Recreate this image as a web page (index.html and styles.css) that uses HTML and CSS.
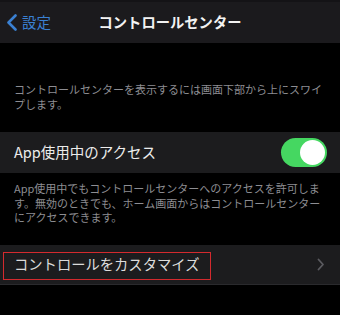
FILE: index.html
```html
<!DOCTYPE html>
<html lang="ja">
<head>
<meta charset="utf-8">
<link rel="stylesheet" href="styles.css">
</head>
<body>
<div class="screen">
  <header class="nav">
    <div class="back">
      <svg class="back-chev" width="12" height="17" viewBox="0 0 12 17"><path d="M9.5 1.5 L2.5 8.5 L9.5 15.5" fill="none" stroke="#3a80d2" stroke-width="2.6" stroke-linecap="round" stroke-linejoin="round"/></svg>
      <span class="back-label">設定</span>
    </div>
    <div class="title">コントロールセンター</div>
  </header>

  <p class="footer footer-first">コントロールセンターを表示するには画面下部から上にスワイプします。</p>

  <div class="row">
    <span class="row-label">App使用中のアクセス</span>
    <div class="toggle"><div class="knob"></div></div>
  </div>

  <p class="footer footer-second">App使用中でもコントロールセンターへのアクセスを許可します。無効のときでも、ホーム画面からはコントロールセンターにアクセスできます。</p>

  <div class="row row-custom">
    <span class="row-label row-label-custom">コントロールをカスタマイズ</span>
    <svg class="chev" width="8" height="13" viewBox="0 0 8 13"><path d="M1.5 1.5 L6 6.5 L1.5 11.5" fill="none" stroke="#5b5b60" stroke-width="1.8" stroke-linecap="round" stroke-linejoin="round"/></svg>
    <div class="highlight"></div>
  </div>
</div>
</body>
</html>
```

FILE: styles.css
```css
* { box-sizing: border-box; }
html, body {
  margin: 0;
  padding: 0;
  background: #000;
}
body {
  font-family: "Noto Sans CJK JP", "Noto Sans", sans-serif;
  width: 340px;
  height: 315px;
  overflow: hidden;
}
.screen {
  display: flex;
  flex-direction: column;
  width: 340px;
}
.nav {
  position: relative;
  height: 43px;
  background: #1b1a1d;
  border-top: 2px solid #141316;
  display: flex;
  align-items: center;
  justify-content: center;
}
.back {
  position: absolute;
  left: 6px;
  top: 0;
  height: 100%;
  display: flex;
  align-items: center;
  gap: 4px;
}
.back-chev { display: block; }
.back-label {
  color: #3a80d2;
  font-size: 14.5px;
  line-height: 1;
}
.title {
  color: #f2f2f2;
  font-size: 14.3px;
  font-weight: 700;
  line-height: 1;
}
.footer {
  margin: 0;
  padding: 0 14px;
  color: #8d8d92;
  font-size: 11px;
  line-height: 14.5px;
}
.footer-first {
  padding-top: 39px;
  padding-bottom: 21px;
}
.footer-second {
  padding-top: 8px;
  padding-bottom: 20px;
}
.row {
  position: relative;
  height: 41px;
  background: #1c1c1e;
  display: flex;
  align-items: center;
  justify-content: space-between;
  padding: 0 13px 0 14px;
}
.row-custom {
  height: 40px;
  border-bottom: 1px solid #2a2a2d;
  padding-right: 15px;
}
.row-label {
  color: #ececec;
  font-size: 14.5px;
  line-height: 1;
}
.row-label-custom {
  color: #dcdcdc;
  font-size: 14.3px;
}
.toggle {
  width: 46px;
  height: 29px;
  border-radius: 15px;
  background: #45d761;
  display: flex;
  align-items: center;
  justify-content: flex-end;
  padding-right: 2px;
}
.knob {
  width: 25px;
  height: 25px;
  border-radius: 50%;
  background: #fff;
}
.chev { display: block; }
.highlight {
  position: absolute;
  left: 3px;
  top: 7px;
  width: 208px;
  height: 28px;
  border: 1.5px solid #d42a2e;
}
```
